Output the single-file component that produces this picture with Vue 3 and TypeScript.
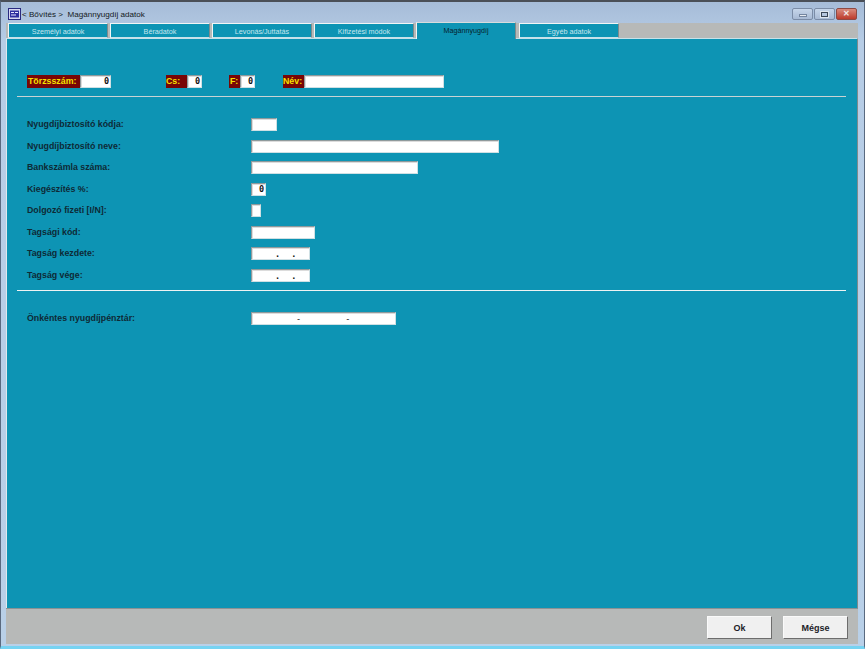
<template>
  <div class="window">
    <div class="titlebar">
      <svg class="app-icon" width="13" height="12" viewBox="0 0 13 12">
        <rect x="0.5" y="0.5" width="12" height="11" fill="#d8d8f0" stroke="#2a2a80" />
        <rect x="2" y="2.5" width="9" height="7" fill="#3030a0" />
        <path d="M3 4.5h3M3 7h5M7 4.5h3" stroke="#e8e8ff" stroke-width="1" />
      </svg>
      <span class="title">&lt; Bővítés &gt;&nbsp; Magánnyugdíj adatok</span>
      <div class="win-buttons">
        <div class="win-btn"><span class="glyph-min"></span></div>
        <div class="win-btn"><span class="glyph-max"></span></div>
        <div class="win-btn close"><span class="glyph-close">✕</span></div>
      </div>
    </div>

    <div class="tabs">
      <div
        v-for="tab in tabs"
        :key="tab"
        class="tab"
        :class="{ active: tab === activeTab }"
      >
        {{ tab }}
      </div>
    </div>

    <div class="panel">
      <div class="head-row">
        <span class="tag tag-torzs">Törzsszám:</span>
        <div class="field num w-torzs">0</div>
        <span class="tag tag-cs">Cs:</span>
        <div class="field num w-small">0</div>
        <span class="tag tag-f">F:</span>
        <div class="field num w-small">0</div>
        <span class="tag tag-nev">Név:</span>
        <div class="field w-nev"></div>
      </div>

      <div class="rule"></div>

      <div class="form">
        <template v-for="row in rows" :key="row.label">
          <label class="lbl">{{ row.label }}</label>
          <div class="field" :class="row.kind" :style="{ width: row.width + 'px' }">
            <span v-for="(g, i) in row.glyphs" :key="i">{{ g }}</span>
          </div>
        </template>
      </div>

      <div class="rule rule-light"></div>

      <div class="form form-last">
        <label class="lbl">Önkéntes nyugdíjpénztár:</label>
        <div class="field dashes w-onk">
          <span>-</span>
          <span>-</span>
        </div>
      </div>
    </div>

    <div class="footer">
      <button class="btn">Ok</button>
      <button class="btn">Mégse</button>
    </div>
  </div>
</template>

<script setup lang="ts">
interface Row {
  label: string
  width: number
  kind?: string
  glyphs?: string[]
}

const activeTab = 'Magánnyugdíj'

const tabs = [
  'Személyi adatok',
  'Béradatok',
  'Levonás/Juttatás',
  'Kifizetési módok',
  'Magánnyugdíj',
  'Egyéb adatok',
]

const rows: Row[] = [
  { label: 'Nyugdíjbiztosító kódja:', width: 26 },
  { label: 'Nyugdíjbiztosító neve:', width: 248 },
  { label: 'Bankszámla száma:', width: 167 },
  { label: 'Kiegészítés %:', width: 15, kind: 'num', glyphs: ['0'] },
  { label: 'Dolgozó fizeti [I/N]:', width: 10 },
  { label: 'Tagsági kód:', width: 64 },
  { label: 'Tagság kezdete:', width: 59, kind: 'dots', glyphs: ['.', '.'] },
  { label: 'Tagság vége:', width: 59, kind: 'dots', glyphs: ['.', '.'] },
]
</script>

<style>
html,
body {
  margin: 0;
  background: #b5cde6;
}
</style>

<style scoped>
.window {
  width: 865px;
  height: 649px;
  box-sizing: border-box;
  display: flex;
  flex-direction: column;
  padding: 0 6px 2px 5px;
  overflow: hidden;
  border-top: 2px solid #4a4f57;
  border-left: 1px solid #5a6a80;
  border-right: 1px solid #5a6a80;
  border-bottom: 3px solid #76d3f2;
  background: linear-gradient(to bottom, #a6bcd8 0, #b7cde6 40px, #b9d0e8 100%);
  font-family: "Liberation Sans", Arial, sans-serif;
  color: #10222c;
}

.titlebar {
  height: 21px;
  padding-top: 3px;
  box-sizing: border-box;
  display: flex;
  align-items: center;
  flex: none;
  font-size: 8.1px;
  color: #141a22;
}

.app-icon {
  margin-left: 2px;
  margin-right: 1px;
  flex: none;
}

.title {
  white-space: pre;
}

.win-buttons {
  margin-left: auto;
  margin-right: 1px;
  display: flex;
  gap: 1px;
}

.win-btn {
  width: 19px;
  height: 10px;
  border: 1px solid #7b8ca6;
  border-radius: 2px;
  background: linear-gradient(to bottom, #c6d6ea, #a8bad4);
  display: flex;
  align-items: center;
  justify-content: center;
}

.win-btn.close {
  background: linear-gradient(to bottom, #d98a7c, #bd3b2c);
  border-color: #8e4a44;
}

.glyph-min {
  width: 6px;
  height: 1px;
  margin-top: 2px;
  background: #e6eaf0;
  border: 1px solid #7486a0;
}

.glyph-max {
  width: 5px;
  height: 3px;
  border: 1px solid #3a4656;
  outline: 1px solid #dfe6ef;
}

.glyph-close {
  color: #f2e8e6;
  font-size: 8px;
  line-height: 8px;
  font-weight: bold;
}

.tabs {
  height: 15px;
  flex: none;
  display: flex;
  gap: 2px;
  padding-left: 2px;
  background: #b7b9b8;
  font-size: 7.2px;
}

.tab {
  width: 100px;
  box-sizing: border-box;
  height: 15px;
  padding-top: 3px;
  text-align: center;
  color: #c8e6ee;
  background: #0d94b4;
  border-top: 1px solid #f2f5f5;
  border-left: 1px solid #f2f5f5;
  border-right: 1px solid #7f8a8c;
  border-bottom: 1px solid #c6e2ea;
  white-space: nowrap;
}

.tab.active {
  height: 17px;
  margin-top: -1px;
  padding-top: 3px;
  border-bottom: none;
  color: #06222c;
  margin-right: 1px;
  z-index: 1;
  border-top-color: #d8dcdc;
}

.panel {
  flex: 1;
  min-height: 0;
  background: #0d94b4;
  border-left: 1px solid #e0e8ee;
  border-right: 1px solid #7f8a8c;
  border-top: 1px solid #c6e2ea;
  padding: 36px 11px 0 10px;
}

.head-row {
  display: flex;
  align-items: center;
  height: 13px;
  margin-bottom: 8px;
  font-size: 8.8px;
  font-weight: bold;
}

.tag {
  background: #780606;
  color: #f5e000;
  height: 13px;
  line-height: 12px;
  box-sizing: border-box;
  flex: none;
}

.tag-torzs {
  width: 53px;
  margin-left: 10px;
  padding-left: 1px;
}

.tag-cs {
  width: 21px;
  margin-left: 55px;
}

.tag-f {
  width: 11px;
  margin-left: 27px;
  padding-left: 1px;
}

.tag-nev {
  width: 21px;
  margin-left: 28px;
}

.field {
  height: 13px;
  box-sizing: border-box;
  background: #fff;
  border-top: 1px solid #8f9a9c;
  border-left: 1px solid #8f9a9c;
  border-right: 1px solid #cfe0e4;
  border-bottom: 1px solid #cfe0e4;
  box-shadow: inset 1px 1px 0 #dcdcdc;
  font-family: "DejaVu Sans Mono", "Liberation Mono", monospace;
  font-size: 8.5px;
  font-weight: bold;
  color: #111;
  flex: none;
}

.num {
  text-align: right;
  padding-right: 1px;
  line-height: 11px;
}

.w-torzs {
  width: 31px;
}

.w-small {
  width: 15px;
}

.w-nev {
  width: 140px;
}

.w-onk {
  width: 145px;
}

.dots,
.dashes {
  display: flex;
  line-height: 12px;
}

.dots {
  padding-left: 23px;
  gap: 11px;
}

.dashes {
  padding-left: 44px;
  gap: 44px;
  font-weight: normal;
}

.rule {
  height: 1px;
  background: #c9d3d4;
}

.rule-light {
  background: #eef3f3;
}

.form {
  margin-top: 21px;
  display: grid;
  grid-template-columns: 224px auto;
  grid-auto-rows: 21.5px;
  justify-items: start;
  padding-left: 10px;
}

.lbl {
  padding-top: 1px;
  font-size: 8.8px;
  font-weight: bold;
  color: #0e2a36;
  line-height: 11px;
}

.footer {
  height: 36px;
  flex: none;
  display: flex;
  justify-content: flex-end;
  align-items: flex-start;
  gap: 11px;
  padding: 7px 10px 0 0;
  box-sizing: border-box;
  background: #b7b9b8;
  border-top: 1px solid #8a9294;
}

.btn {
  width: 65px;
  height: 23px;
  padding: 0;
  box-sizing: border-box;
  background: #f0f0f0;
  border: none;
  border-top: 1px solid #fafafa;
  border-left: 1px solid #fafafa;
  border-right: 1px solid #6d6d6d;
  border-bottom: 1px solid #6d6d6d;
  font-family: "Liberation Sans", Arial, sans-serif;
  font-size: 9px;
  font-weight: bold;
  color: #1c1c28;
}
</style>
